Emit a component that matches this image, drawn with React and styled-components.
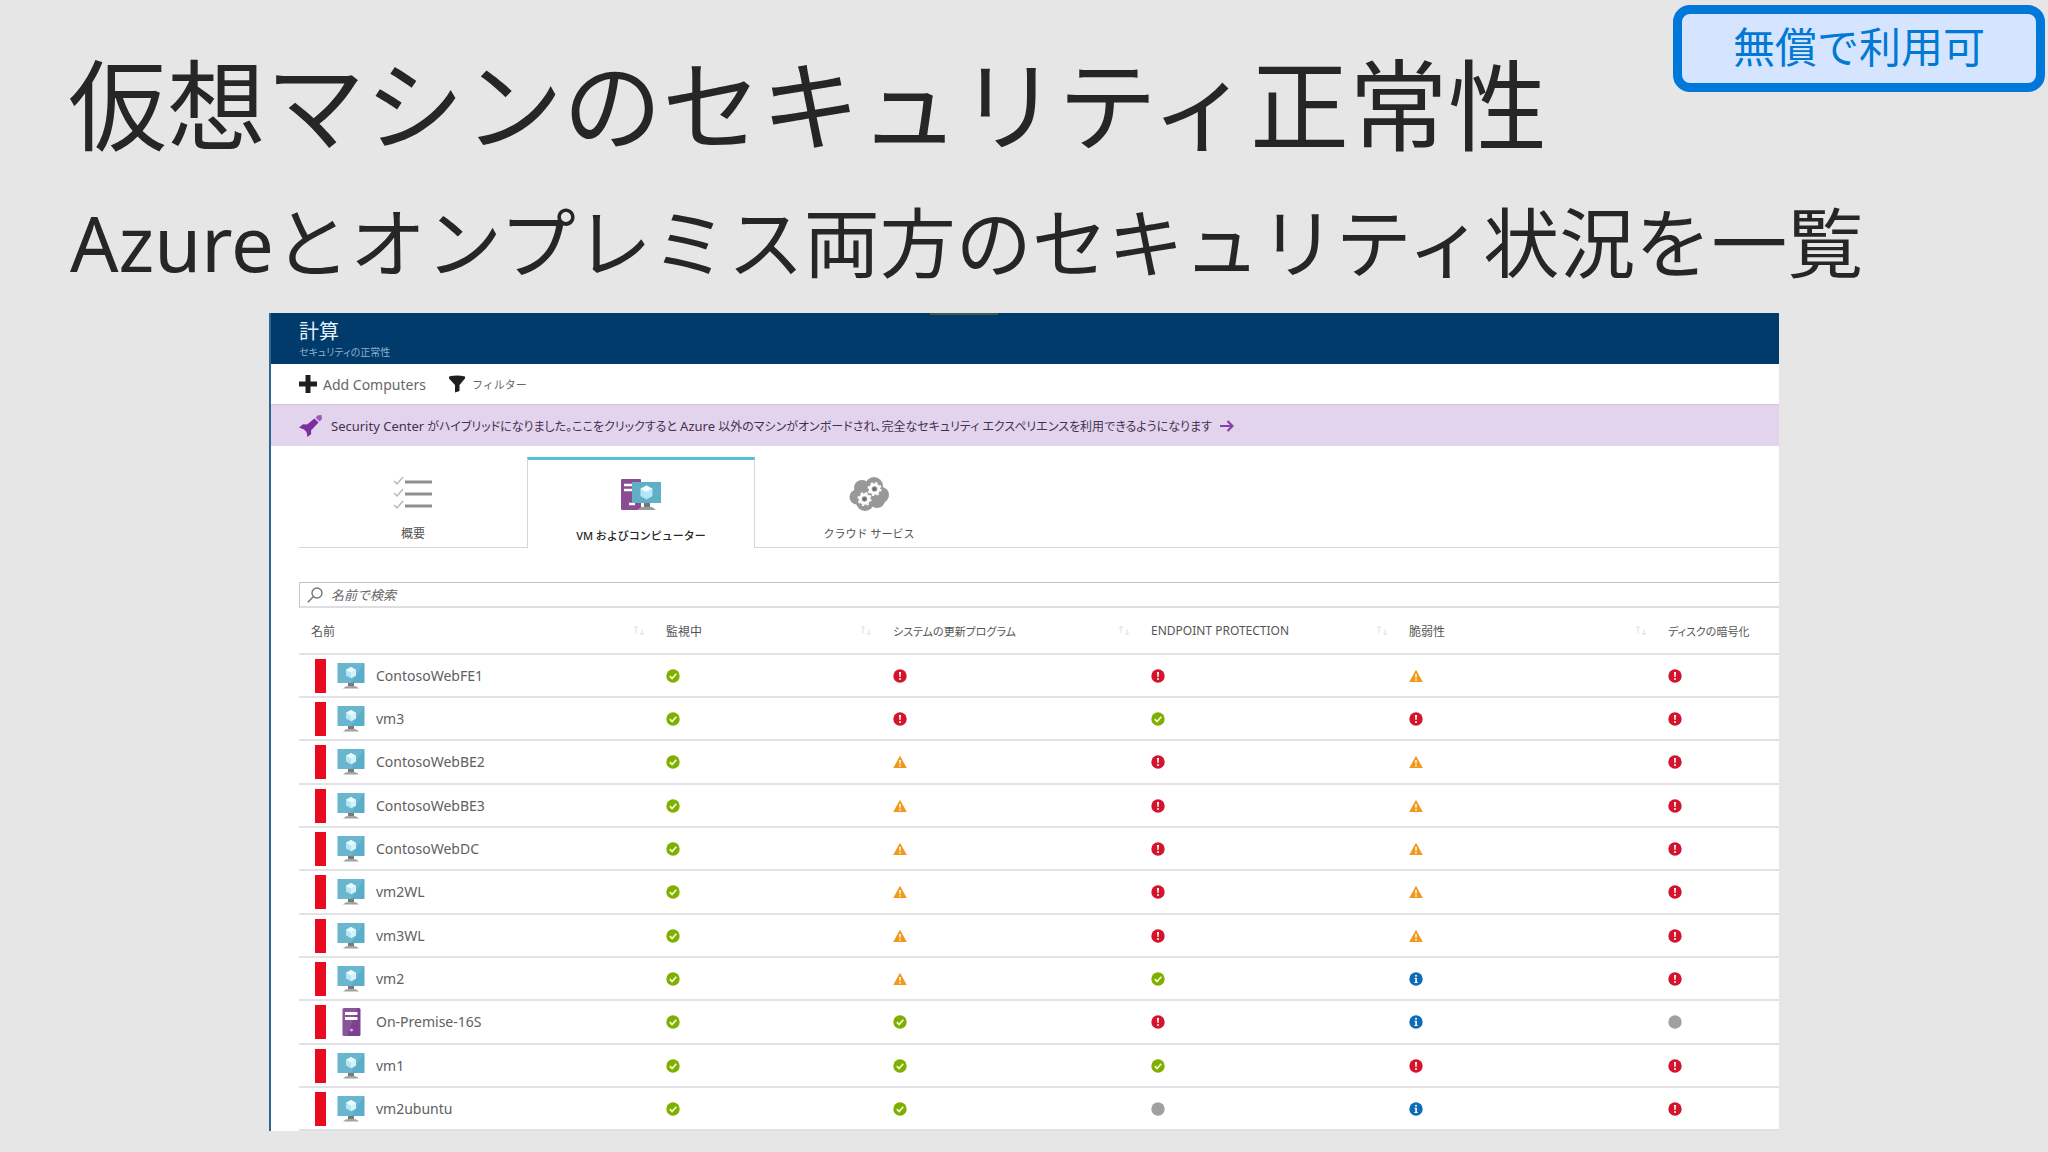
import React from 'react';
import styled, { createGlobalStyle } from 'styled-components';

const GlobalStyle = createGlobalStyle`
    * {
        box-sizing: border-box;
    }
    body {
        margin: 0;
        min-height: 100vh;
        background-color: #e6e6e6;
        font-family: "Noto Sans", "Noto Sans CJK JP", sans-serif;
    }
    button, input {
        font-family: inherit;
    }
`

const columns = [
    { label: '名前', width: 367 },
    { label: '監視中', width: 227 },
    { label: 'システムの更新プログラム', width: 258, small: true },
    { label: 'ENDPOINT PROTECTION', width: 258 },
    { label: '脆弱性', width: 259 },
    { label: 'ディスクの暗号化', width: 111, small: true },
];

const machines = [
    { name: 'ContosoWebFE1', status: ['ok', 'error', 'error', 'warn', 'error'] },
    { name: 'vm3', status: ['ok', 'error', 'ok', 'error', 'error'] },
    { name: 'ContosoWebBE2', status: ['ok', 'warn', 'error', 'warn', 'error'] },
    { name: 'ContosoWebBE3', status: ['ok', 'warn', 'error', 'warn', 'error'] },
    { name: 'ContosoWebDC', status: ['ok', 'warn', 'error', 'warn', 'error'] },
    { name: 'vm2WL', status: ['ok', 'warn', 'error', 'warn', 'error'] },
    { name: 'vm3WL', status: ['ok', 'warn', 'error', 'warn', 'error'] },
    { name: 'vm2', status: ['ok', 'warn', 'ok', 'info', 'error'] },
    { name: 'On-Premise-16S', server: true, status: ['ok', 'ok', 'error', 'info', 'none'] },
    { name: 'vm1', status: ['ok', 'ok', 'ok', 'error', 'error'] },
    { name: 'vm2ubuntu', status: ['ok', 'ok', 'none', 'info', 'error'] },
];

const statusLabels = {
    ok: '正常',
    error: 'エラー',
    warn: '警告',
    info: '情報',
    none: 'なし',
};

const StatusIcon = ({ type }) =>{
    return (
        <Icon width="14" height="14" viewBox="0 0 14 14" role="img" aria-label={statusLabels[type]}>
            {type === 'ok' && <>
                <circle cx="7" cy="7" r="6.7" fill="#7fb000" />
                <path d="M3.8 7.2l2.3 2.4 4.2-4.8" fill="none" stroke="#f2fbd8" strokeWidth="1.7" />
            </>}
            {type === 'error' && <>
                <circle cx="7" cy="7" r="6.7" fill="#d3142c" />
                <path d="M6 3h2l-.4 5H6.4z" fill="#fff" />
                <circle cx="7" cy="10" r="1" fill="#fff" />
            </>}
            {type === 'warn' && <>
                <path d="M7 .8L13.8 13H.2z" fill="#f0991c" />
                <path d="M6.2 5h1.6l-.3 4.2h-1z" fill="#fff" />
                <circle cx="7" cy="10.9" r=".8" fill="#fff" />
            </>}
            {type === 'info' && <>
                <circle cx="7" cy="7" r="6.7" fill="#0f6cb4" />
                <circle cx="7" cy="3.8" r="1" fill="#fff" />
                <path d="M5.5 5.8h2.4v4.3h.8v1H5.4v-1h.9V6.8h-.8z" fill="#fff" />
            </>}
            {type === 'none' && <circle cx="7" cy="7" r="6.7" fill="#a0a0a2" />}
        </Icon>
    )
}

const MonitorIcon = () =>{
    return (
        <Icon width="28" height="26" viewBox="0 0 28 26" aria-hidden="true">
            <rect x=".5" y="0" width="27" height="20" fill="#5aaec9" />
            <path d="M.5 0h27L14 20H.5z" fill="#fff" opacity=".1" />
            <path d="M14 4l5 2.8v5.6l-5 2.9-5-2.9V6.8z" fill="#b5e6f7" />
            <path d="M14 4l5 2.8-5 2.9-5-2.9z" fill="#e9fbff" />
            <path d="M14 9.7l5-2.9v5.6l-5 2.9z" fill="#d6f2fb" />
            <path d="M11 20h6v3.5h-6z" fill="#7a7a7a" />
            <path d="M6 25.5l3-2.3h10l3 2.3z" fill="#a0a1a2" />
        </Icon>
    )
}

const ServerIcon = () =>{
    return (
        <Icon width="28" height="28" viewBox="0 0 28 28" aria-hidden="true">
            <rect x="5.5" y="0" width="18" height="28" rx="1.5" fill="#7d4190" />
            <path d="M5.5 1.5Q5.5 0 7 0h14L10 28H7q-1.5 0-1.5-1.5z" fill="#fff" opacity=".1" />
            <rect x="8" y="4" width="12.5" height="3" fill="#fff" />
            <rect x="8" y="9" width="12.5" height="3" fill="#fff" />
            <circle cx="14.5" cy="22" r="1.6" fill="#d9a8e6" />
        </Icon>
    )
}

const SortIcon = () =>{
    return (
        <Icon width="12" height="12" viewBox="0 0 12 12" aria-hidden="true">
            <path d="M3 8V1M1 3l2-2 2 2M9 4v6M7 8l2 2 2-2" fill="none" stroke="#dfdfe4" />
        </Icon>
    )
}

const ChecklistIcon = () =>{
    return (
        <Icon width="40" height="34" viewBox="0 0 40 34" aria-hidden="true">
            <path d="M1 4l3 3 6-7M1 16l3 3 6-7M1 28l3 3 6-7" fill="none" stroke="#b9b9bb" strokeWidth="1.5" />
            <path d="M12 5h27M12 17h27M12 29h27" stroke="#8f8f92" strokeWidth="3" />
        </Icon>
    )
}

const ComputersIcon = () =>{
    return (
        <Icon width="42" height="34" viewBox="0 0 42 34" aria-hidden="true">
            <rect x="1" y="2" width="20" height="31" rx="1" fill="#8a4c92" />
            <path d="M4 8h10M4 13h8M9 27h6" stroke="#fff" strokeWidth="2.5" />
            <rect x="12" y="5" width="29" height="21" fill="#5fb0c6" />
            <path d="M26.5 8.5l6 3.2V19l-6 3.5-6-3.500v-7.3z" fill="#b5e6f7" />
            <path d="M26.5 8.5l6 3.2-6 3.4-6-3.4z" fill="#effcff" />
            <path d="M24 26h6v4h-6z" fill="#77777a" />
            <path d="M17 33l4-3h11l4 3z" fill="#99999b" />
        </Icon>
    )
}

const CloudIcon = () =>{
    return (
        <Icon width="40" height="34" viewBox="0 0 40 34" aria-hidden="true">
            <g fill="#98989b">
                <circle cx="25" cy="9" r="9" />
                <circle cx="13" cy="11" r="8" />
                <circle cx="32" cy="18" r="8" />
                <circle cx="8" cy="20" r="7.5" />
                <circle cx="16" cy="25" r="9" />
                <circle cx="28" cy="23" r="8" />
                <circle cx="20" cy="17" r="9" />
            </g>
            <g fill="#98989b" stroke="#fff">
                <circle cx="25.5" cy="12" r="4.3" strokeWidth="3" />
                <circle cx="15.5" cy="22" r="4.3" strokeWidth="3" />
                <circle cx="25.5" cy="12" r="6.3" fill="none" strokeWidth="1.5" strokeDasharray="2.5 2.45" />
                <circle cx="15.5" cy="22" r="6.3" fill="none" strokeWidth="1.5" strokeDasharray="2.5 2.45" />
            </g>
            <circle cx="25.5" cy="12" r="1.8" fill="#6c6c70" />
            <circle cx="15.5" cy="22" r="1.8" fill="#6c6c70" />
        </Icon>
    )
}

const tabs = [
    { label: '概要', icon: ChecklistIcon },
    { label: 'VM およびコンピューター', icon: ComputersIcon, active: true, small: true },
    { label: 'クラウド サービス', icon: CloudIcon, small: true },
];

const App = () =>{
    return (
        <Slide>
            <GlobalStyle />
            <Badge>無償で利用可</Badge>
            <Title>仮想マシンのセキュリティ正常性</Title>
            <Subtitle>Azureとオンプレミス両方のセキュリティ状況を一覧</Subtitle>
            <Panel>
                <PanelHeader>
                    <PanelTitle>計算</PanelTitle>
                    <PanelCaption>セキュリティの正常性</PanelCaption>
                </PanelHeader>
                <Toolbar>
                    <ToolButton>
                        <Icon width="18" height="18" viewBox="0 0 18 18" aria-hidden="true">
                            <path d="M6.5 0h5v6.500H18v5h-6.500V18h-5v-6.500H0v-5h6.500z" fill="#1e1e1e" />
                        </Icon>
                        Add Computers
                    </ToolButton>
                    <ToolButton $small>
                        <Icon width="18" height="18" viewBox="0 0 18 18" aria-hidden="true">
                            <path d="M1 1.5Q9-.5 17 1.5v2L11.5 10v6L7 17.5V10L1 3.5z" fill="#1e1e1e" />
                        </Icon>
                        フィルター
                    </ToolButton>
                </Toolbar>
                <Banner href="#onboard">
                    <Icon width="24" height="24" viewBox="0 0 24 24" aria-hidden="true">
                        <path d="M22.5 1l.5 4-2.5 2.5-4-4L19 1.2z" fill="#9a5cb8" />
                        <path d="M15.5 4.5l4 4-7.5 8 .2 3.5-3.7 3-1-5L5 15.500 0 13.500l4-3.200 4 .2z" fill="#7b2f9e" />
                    </Icon>
                    <BannerText>
                        <Latin>Security Center</Latin> がハイブリッドになりました。ここをクリックすると <Latin>Azure</Latin> 以外のマシンがオンボードされ、完全なセキュリティ エクスペリエンスを利用できるようになります
                    </BannerText>
                    <Icon width="14" height="14" viewBox="0 0 14 14" aria-hidden="true">
                        <path d="M0 7h12M7.500 2l5 5-5 5" fill="none" stroke="#8a3fa8" strokeWidth="2.2" />
                    </Icon>
                </Banner>
                <Content>
                    <Tabs role="tablist">
                        {tabs.map(({ label, icon: TabIcon, active, small }) => (
                            <Tab key={label} role="tab" aria-selected={!!active} $active={active} $small={small}>
                                <TabIcon />
                                {label}
                            </Tab>
                        ))}
                    </Tabs>
                    <Search>
                        <Icon width="16" height="16" viewBox="0 0 16 16" aria-hidden="true">
                            <circle cx="10" cy="6" r="5" fill="none" stroke="#77777b" strokeWidth="1.4" />
                            <path d="M6.5 9.5L.8 15.2" stroke="#77777b" strokeWidth="1.6" />
                        </Icon>
                        <SearchInput type="text" placeholder="名前で検索" aria-label="名前で検索" />
                    </Search>
                    <Table>
                        <colgroup>
                            {columns.map(({ label, width }) => <col key={label} width={width} />)}
                        </colgroup>
                        <thead>
                            <tr>
                                {columns.map(({ label, small }, i) => (
                                    <HeadCell key={label} scope="col" $small={small}>
                                        <HeadLabel $first={i === 0}>
                                            {label}
                                            {i < columns.length - 1 && <SortIcon />}
                                        </HeadLabel>
                                    </HeadCell>
                                ))}
                            </tr>
                        </thead>
                        <tbody>
                            {machines.map(({ name, server, status }) => (
                                <Row key={name}>
                                    <Cell>
                                        <Machine>
                                            <Severity />
                                            {server ? <ServerIcon /> : <MonitorIcon />}
                                            {name}
                                        </Machine>
                                    </Cell>
                                    {status.map((type, i) => (
                                        <Cell key={i}><StatusIcon type={type} /></Cell>
                                    ))}
                                </Row>
                            ))}
                        </tbody>
                    </Table>
                </Content>
            </Panel>
        </Slide>
    )
}

export default App;

const Slide = styled.main`
    position: relative;
    padding: 56px 0 22px;
    color: #262626;
`
const Badge = styled.div`
    position: absolute;
    top: 5px;
    right: 3px;
    padding: 8px 51px 12px;
    border: 9px solid #0078d9;
    border-radius: 17px;
    background-color: #d5e4ff;
    color: #0078d4;
    font-size: 42px;
    line-height: 49px;
`
const Title = styled.h1`
    margin: 0 68px;
    font-size: 99px;
    font-weight: 400;
    line-height: 98px;
`
const Subtitle = styled.h2`
    margin: 44px 70px 0;
    font-size: 76px;
    font-weight: 400;
    line-height: 90px;
`
const Panel = styled.section`
    margin: 25px 269px 0;
    border-left: 2px solid #2f6591;
    background-color: #fff;
    font-feature-settings: "palt";
`
const PanelHeader = styled.header`
    display: flex;
    flex-direction: column;
    height: 51px;
    padding: 0 28px;
    background-color: #003b6b;
    &::before {
        content: "";
        width: 68px;
        height: 2px;
        margin: 0 auto 6px 631px;
        background-color: #3c5a4c;
    }
`
const PanelTitle = styled.div`
    color: #e4f1fa;
    font-size: 20px;
    line-height: 22px;
`
const PanelCaption = styled.div`
    color: #8fb0cb;
    font-size: 10px;
    line-height: 18px;
`
const Toolbar = styled.div`
    display: flex;
    gap: 22px;
    height: 40px;
    padding: 0 28px;
`
const ToolButton = styled.button`
    display: flex;
    align-items: center;
    gap: 6px;
    padding: 0;
    border: none;
    background: none;
    color: #666;
    font-size: ${props => props.$small ? 11 : 14}px;
`
const Banner = styled.a`
    display: flex;
    align-items: center;
    gap: 8px;
    height: 42px;
    padding: 0 28px;
    border-top: 1px solid #d2c4dc;
    background-color: #e3d4ee;
    color: #45304f;
    text-decoration: none;
    white-space: nowrap;
`
const BannerText = styled.span`
    font-size: 12px;
`
const Latin = styled.span`
    font-size: 13px;
`
const Content = styled.div`
    padding: 11px 0 0 28px;
`
const Tabs = styled.div`
    display: flex;
    height: 91px;
    box-shadow: inset 0 -1px #d6d6da;
`
const Tab = styled.button`
    display: flex;
    flex-direction: column;
    align-items: center;
    gap: ${props => props.$active ? 13 : 11}px;
    width: 228px;
    padding: 17px 0 0;
    border: 1px solid transparent;
    border-top: 3px solid transparent;
    border-bottom: none;
    background: none;
    color: ${props => props.$active ? '#262626' : '#505050'};
    font-size: ${props => props.$small ? 11 : 12}px;
    line-height: 24px;
    ${props => props.$active && `
        border-color: #d6d6da;
        border-top-color: #55bfdc;
        background-color: #fff;
        font-weight: 500;
    `}
`
const Search = styled.label`
    display: flex;
    align-items: center;
    gap: 8px;
    height: 26px;
    margin-top: 34px;
    padding: 0 7px;
    border: 1px solid #c3c3c8;
    border-right: none;
    border-bottom: 2px solid #dedee2;
`
const SearchInput = styled.input`
    flex: 1;
    padding: 0;
    border: none;
    outline: none;
    background: none;
    font-size: 13px;
    font-style: italic;
    &::placeholder {
        color: #666;
    }
`
const Table = styled.table`
    width: 100%;
    table-layout: fixed;
    border-collapse: separate;
    border-spacing: 0;
`
const HeadCell = styled.th`
    height: 47px;
    padding: 0;
    border-bottom: 2px solid #e2e1e5;
    color: #555;
    font-size: ${props => props.$small ? 11 : 12}px;
    font-weight: 400;
    text-align: left;
    white-space: nowrap;
`
const HeadLabel = styled.div`
    display: flex;
    align-items: center;
    justify-content: space-between;
    padding: 0 21px 0 ${props => props.$first ? 12 : 0}px;
`
const Row = styled.tr`
    height: 43px;
    &:nth-child(3n) {
        height: 44px;
    }
`
const Cell = styled.td`
    padding: 0;
    border-bottom: 2px solid #e2e1e5;
`
const Machine = styled.div`
    display: flex;
    align-items: center;
    gap: 11px;
    padding-left: 16px;
    color: #606060;
    font-size: 14px;
    line-height: 34px;
`
const Severity = styled.span`
    width: 11px;
    height: 34px;
    background-color: #ea0a20;
`
const Icon = styled.svg`
    display: block;
    flex: none;
`
